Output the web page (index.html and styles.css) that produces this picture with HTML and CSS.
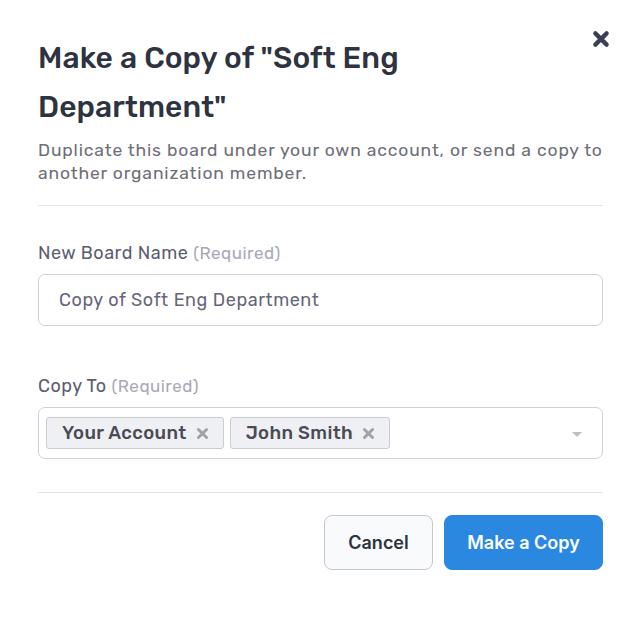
FILE: index.html
```html
<!DOCTYPE html>
<html lang="en">
<head>
    <meta charset="UTF-8">
    <meta name="viewport" content="width=device-width, initial-scale=1.0">
    <title>Make a Copy</title>
    <link rel="stylesheet" href="styles.css">
</head>
<body>
    <div class="modal">
        <button class="close" type="button" aria-label="Close">
            <svg width="18" height="18" viewBox="0 0 16 16"><path d="M3 3 L13 13 M13 3 L3 13" stroke="#3a4050" stroke-width="3.8" stroke-linecap="round"/></svg>
        </button>
        <h1>Make a Copy of "Soft Eng Department"</h1>
        <p class="desc">Duplicate this board under your own account, or send a copy to another organization member.</p>

        <hr>

        <div class="field">
            <label for="boardName">New Board Name <span class="req">(Required)</span></label>
            <input type="text" id="boardName" value="Copy of Soft Eng Department">
        </div>

        <div class="field copy-to">
            <label>Copy To <span class="req">(Required)</span></label>
            <div class="select">
                <span class="tag">Your Account
                    <svg class="tag-x" width="13" height="13" viewBox="0 0 16 16"><path d="M3 3 L13 13 M13 3 L3 13" stroke="#a0a0a8" stroke-width="3.6" stroke-linecap="round"/></svg>
                </span>
                <span class="tag">John Smith
                    <svg class="tag-x" width="13" height="13" viewBox="0 0 16 16"><path d="M3 3 L13 13 M13 3 L3 13" stroke="#a0a0a8" stroke-width="3.6" stroke-linecap="round"/></svg>
                </span>
                <span class="caret"></span>
            </div>
        </div>

        <hr>

        <div class="actions">
            <button type="button" class="btn btn-cancel">Cancel</button>
            <button type="button" class="btn btn-primary">Make a Copy</button>
        </div>
    </div>
</body>
</html>
```

FILE: styles.css
```css
body {
    margin: 0;
    background: #fff;
    font-family: Rubik, Inter, "Noto Sans", sans-serif;
}
.modal {
    position: relative;
    padding: 34px 37px 40px 38px;
}
.close {
    position: absolute;
    top: 30px;
    right: 30px;
    padding: 0;
    border: none;
    background: none;
    cursor: pointer;
}
h1 {
    margin: 0 40px 0 0;
    font-size: 30px;
    font-weight: 500;
    line-height: 49px;
    color: #2d3340;
    letter-spacing: 0.1px;
}
.desc {
    margin: 7px 0 0;
    font-size: 17.5px;
    line-height: 23px;
    letter-spacing: 0.85px;
    color: #6e6e78;
}
hr {
    border: none;
    border-top: 1px solid #e4e4e8;
    margin: 20px 0 0;
}
.field {
    margin-top: 35px;
}
.copy-to {
    margin-top: 48px;
}
label {
    display: block;
    font-size: 18px;
    line-height: 24px;
    letter-spacing: 0.5px;
    color: #5d5d70;
    margin-bottom: 9px;
}
.req {
    color: #a8a8b8;
    font-size: 17px;
    letter-spacing: 0.5px;
}
input {
    display: block;
    box-sizing: border-box;
    width: 100%;
    height: 52px;
    padding: 0 20px;
    border: 1px solid #d0d0d8;
    border-radius: 7px;
    font-family: inherit;
    font-size: 18px;
    letter-spacing: 0.55px;
    color: #66667a;
}
.select {
    position: relative;
    box-sizing: border-box;
    height: 52px;
    border: 1px solid #d0d0d8;
    border-radius: 7px;
    display: flex;
    align-items: center;
    gap: 6px;
    padding: 0 7px;
}
.tag {
    display: inline-flex;
    align-items: center;
    gap: 9px;
    box-sizing: border-box;
    height: 32px;
    padding: 0 14px 0 15px;
    background: #eff0f3;
    border: 1px solid #cbcbd2;
    border-radius: 3px;
    font-size: 18.5px;
    font-weight: 500;
    letter-spacing: 0.4px;
    color: #4b4b55;
}
.caret {
    position: absolute;
    right: 20px;
    top: 24px;
    border-left: 5px solid transparent;
    border-right: 5px solid transparent;
    border-top: 5px solid #bdbdc6;
}
.copy-to + hr {
    margin-top: 33px;
}
.actions {
    display: flex;
    justify-content: flex-end;
    gap: 11px;
    margin-top: 22px;
}
.btn {
    height: 55px;
    border-radius: 8px;
    font-family: Inter, "Liberation Sans", sans-serif;
    font-size: 18px;
    font-weight: 600;
    cursor: pointer;
}
.btn-cancel {
    width: 109px;
    background: #f9fafb;
    border: 1px solid #c6c6d0;
    color: #2d3340;
}
.btn-primary {
    width: 159px;
    background: #2b88e0;
    border: 1px solid #2b88e0;
    color: #fff;
}
```
